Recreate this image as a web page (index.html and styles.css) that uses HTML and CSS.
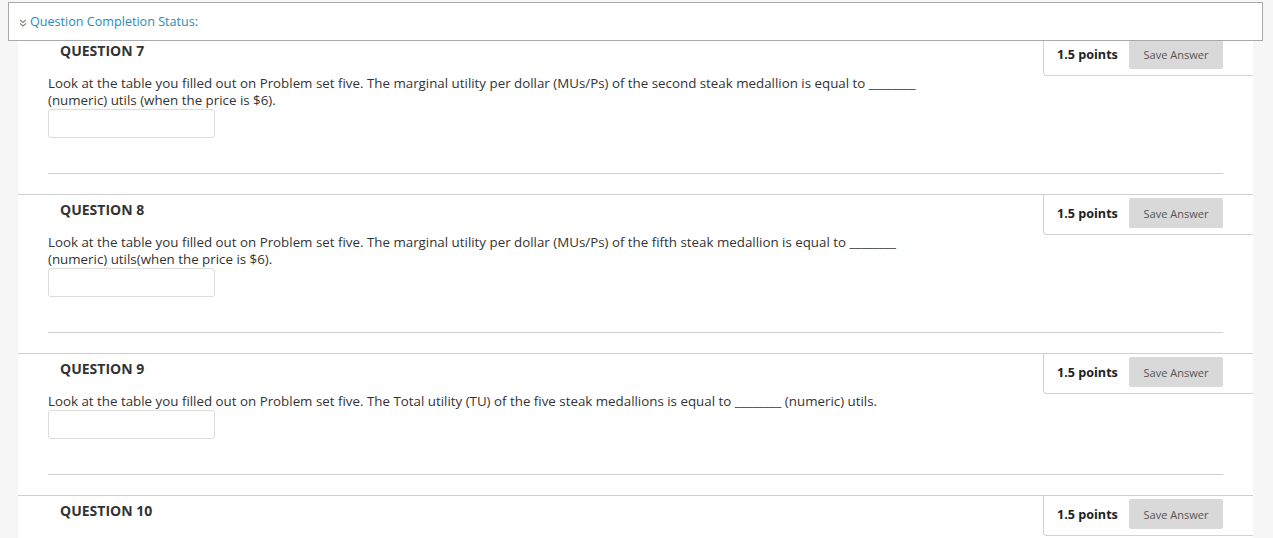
FILE: index.html
```html
<!DOCTYPE html>
<html lang="en">

<head>
    <meta charset="UTF-8">
    <meta name="viewport" content="width=device-width, initial-scale=1.0">
    <title>Take Test</title>
    <link rel="stylesheet" href="styles.css">
</head>

<body>

    <!-- fixed status bar over the test -->
    <div class="statusBar">
        <svg class="chev" width="8" height="8" viewBox="0 0 8 8">
            <path d="M1 1 L4 3.5 L7 1 M1 4.5 L4 7 L7 4.5" fill="none" stroke="#8a8a8a" stroke-width="1.2"/>
        </svg>
        <span class="statusText">Question Completion Status:</span>
    </div>

    <div class="page">
        <div class="sheet">

            <div class="question">
                <div class="qHead">
                    <h3 class="qTitle">QUESTION 7</h3>
                    <div class="qPoints">
                        <span class="pts">1.5 points</span>
                        <button class="saveBtn">Save Answer</button>
                    </div>
                </div>
                <p class="qText">Look at the table you filled out on Problem set five. The marginal utility per dollar (MUs/Ps) of the second steak medallion is equal to ________<br>(numeric) utils (when the price is $6).</p>
                <input class="answer" type="text">
                <hr class="qRule">
            </div>

            <div class="question">
                <div class="qHead">
                    <h3 class="qTitle">QUESTION 8</h3>
                    <div class="qPoints">
                        <span class="pts">1.5 points</span>
                        <button class="saveBtn">Save Answer</button>
                    </div>
                </div>
                <p class="qText">Look at the table you filled out on Problem set five. The marginal utility per dollar (MUs/Ps) of the fifth steak medallion is equal to ________<br>(numeric) utils(when the price is $6).</p>
                <input class="answer" type="text">
                <hr class="qRule">
            </div>

            <div class="question">
                <div class="qHead">
                    <h3 class="qTitle">QUESTION 9</h3>
                    <div class="qPoints">
                        <span class="pts">1.5 points</span>
                        <button class="saveBtn">Save Answer</button>
                    </div>
                </div>
                <p class="qText">Look at the table you filled out on Problem set five. The Total utility (TU) of the five steak medallions is equal to ________ (numeric) utils.</p>
                <input class="answer" type="text">
                <hr class="qRule">
            </div>

            <!-- 只露出了标题 -->
            <div class="question">
                <div class="qHead">
                    <h3 class="qTitle">QUESTION 10</h3>
                    <div class="qPoints">
                        <span class="pts">1.5 points</span>
                        <button class="saveBtn">Save Answer</button>
                    </div>
                </div>
            </div>

        </div>
    </div>

</body>

</html>
```

FILE: styles.css
```css
body {
    margin: 0;
    background: #f6f6f6;
    font-family: "Open Sans", "Liberation Sans", sans-serif;
    color: #333;
}

.statusBar {
    position: fixed;
    top: 2px;
    left: 8px;
    width: 1255px;
    height: 39px;
    box-sizing: border-box;
    background: #fff;
    border: 1px solid #a9a9a9;
    display: flex;
    align-items: center;
    padding-left: 10px;
    z-index: 5;
}

.statusBar .chev {
    margin-right: 3px;
    margin-top: 2px;
}

.statusText {
    font-size: 12.6px;
    color: #2a8cb4;
}

.page {
    padding: 35px 20px 0 18px;
}

.sheet {
    background: #fff;
}

.question {
    border-top: 1px solid #cfcfcf;
    padding: 0 30px 20px 30px;
}

.qHead {
    display: flex;
    justify-content: space-between;
    align-items: flex-start;
}

.qTitle {
    margin: 6px 0 0 12px;
    font-size: 14px;
    font-weight: 700;
    line-height: 18px;
    color: #333;
}

.qPoints {
    display: flex;
    align-items: center;
    margin-right: -30px;
    width: 210px;
    padding: 3px 30px 6px 13px;
    box-sizing: border-box;
    border-left: 1px solid #d2d2d2;
    border-bottom: 1px solid #d2d2d2;
    border-bottom-left-radius: 4px;
}

.pts {
    font-size: 12.6px;
    font-weight: 700;
    color: #222;
    flex: 1;
}

.saveBtn {
    width: 94px;
    height: 30px;
    border: none;
    border-radius: 2px;
    background: #d9d9d9;
    color: #555;
    font-family: "Open Sans", "Liberation Sans", sans-serif;
    font-size: 11px;
    padding: 0;
}

.qText {
    margin: -1px 0 0 0;
    font-size: 13.33px;
    line-height: 17px;
    color: #333;
}

.answer {
    display: block;
    width: 167px;
    height: 29px;
    box-sizing: border-box;
    margin: 0;
    border: 1px solid #dcdcdc;
    border-radius: 3px;
}

.qRule {
    margin: 35px 0 0 0;
    border: none;
    border-top: 1px solid #cfcfcf;
}
```
